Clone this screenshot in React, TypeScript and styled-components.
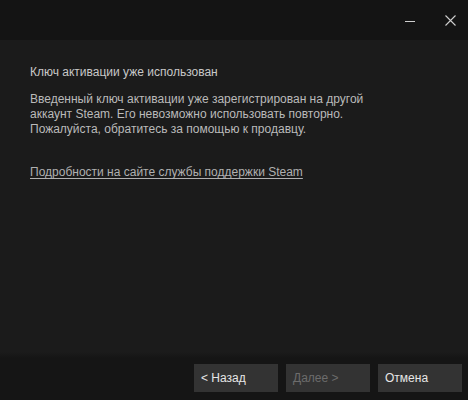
import styled, { createGlobalStyle } from "styled-components";

const GlobalStyle = createGlobalStyle`
  html, body {
    margin: 0;
    padding: 0;
    background: #1b1b1b;
  }
  body {
    font-family: "Liberation Sans", Arial, sans-serif;
  }
`;

const Window = styled.div`
  width: 468px;
  height: 400px;
  display: flex;
  flex-direction: column;
  background: #1b1b1b;
  color: #c6c6c6;
  font-size: 12px;
`;

const TitleBar = styled.div`
  height: 40px;
  flex-shrink: 0;
  background: #141414;
  display: flex;
  justify-content: flex-end;
  align-items: center;
  gap: 4px;
`;

const WindowButton = styled.button`
  width: 36px;
  height: 40px;
  border: none;
  background: transparent;
  display: flex;
  align-items: center;
  justify-content: center;
  padding: 0;
`;

const Body = styled.div`
  flex: 1;
  padding: 25px 30px 0;
  display: flex;
  flex-direction: column;
`;

const Heading = styled.div`
  line-height: 14px;
  color: #c8c8c8;
  margin-bottom: 13px;
`;

const Paragraph = styled.p`
  margin: 0 0 28px;
  line-height: 15px;
  color: #bababa;
`;

const SupportLink = styled.a`
  line-height: 14px;
  color: #b0b0b0;
  text-decoration: underline;
  text-underline-offset: 2px;
  cursor: pointer;
  align-self: flex-start;
`;

const Footer = styled.div`
  height: 48px;
  flex-shrink: 0;
  background: linear-gradient(#1b1b1b 0px, #151515 6px);
  display: flex;
  justify-content: flex-end;
  align-items: flex-start;
  gap: 8px;
  padding: 12px 6px 0 0;
  box-sizing: border-box;
`;

const DialogButton = styled.button<{ $disabled?: boolean }>`
  width: 84px;
  height: 28px;
  border: none;
  background: #333333;
  color: ${(p) => (p.$disabled ? "#6c6c6c" : "#e6e6e6")};
  font-family: "Liberation Sans", Arial, sans-serif;
  font-size: 12px;
  text-align: left;
  padding: 0 7px;
`;

export default function App() {
  return (
    <>
      <GlobalStyle />
      <Window>
        <TitleBar>
          <WindowButton aria-label="Свернуть">
            <svg width="10" height="10" viewBox="0 0 10 10">
              <line x1="0" y1="6.5" x2="10" y2="6.5" stroke="#cfcfcf" strokeWidth="1" />
            </svg>
          </WindowButton>
          <WindowButton aria-label="Закрыть">
            <svg width="11" height="11" viewBox="0 0 11 11">
              <path d="M0.5 0.5 L10.5 10.5 M10.5 0.5 L0.5 10.5" stroke="#cfcfcf" strokeWidth="1.1" />
            </svg>
          </WindowButton>
        </TitleBar>
        <Body>
          <Heading>Ключ активации уже использован</Heading>
          <Paragraph>
            Введенный ключ активации уже зарегистрирован на другой
            <br />
            аккаунт Steam. Его невозможно использовать повторно.
            <br />
            Пожалуйста, обратитесь за помощью к продавцу.
          </Paragraph>
          <SupportLink>Подробности на сайте службы поддержки Steam</SupportLink>
        </Body>
        <Footer>
          <DialogButton>&lt; Назад</DialogButton>
          <DialogButton $disabled disabled>
            Далее &gt;
          </DialogButton>
          <DialogButton>Отмена</DialogButton>
        </Footer>
      </Window>
    </>
  );
}
